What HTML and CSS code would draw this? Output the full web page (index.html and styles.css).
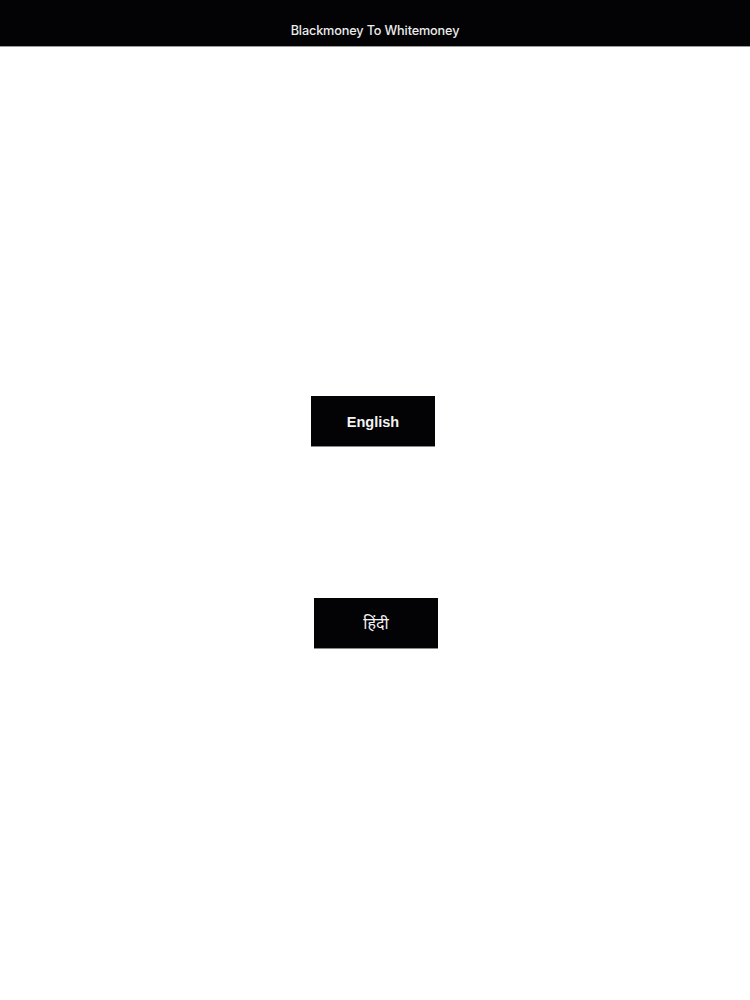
FILE: index.html
```html
<!DOCTYPE html>
<html lang="en">
<head>
<meta charset="utf-8">
<title>Blackmoney To Whitemoney</title>
<link rel="stylesheet" href="styles.css">
</head>
<body>
<header class="topbar">
  <h1 class="title">Blackmoney To Whitemoney</h1>
</header>
<main class="content">
  <button class="lang-btn lang-en">English</button>
  <button class="lang-btn lang-hi" lang="hi">हिंदी</button>
</main>
</body>
</html>
```
FILE: styles.css
```css
html, body {
  margin: 0;
  padding: 0;
  background: #ffffff;
  font-family: "Liberation Sans", Arial, sans-serif;
}
.topbar {
  height: 46px;
  background: #030205;
  border-bottom: 1px solid #9a9a9a;
  display: flex;
  align-items: flex-end;
  justify-content: center;
}
.title {
  margin: 0 0 7px 0;
  font-size: 12.7px;
  font-weight: 500;
  color: #ececec;
  font-family: "Inter", "Liberation Sans", sans-serif;
  letter-spacing: -0.15px;
  line-height: 16px;
}
.content {
  display: flex;
  flex-direction: column;
  align-items: center;
  padding-top: 349px;
  gap: 151px;
}
.lang-btn {
  width: 124px;
  height: 51px;
  background: #030205;
  color: #f4f4f4;
  border: 1px solid #8a8a8a;
  border-width: 0 0 1px 0;
  font-size: 15px;
  padding: 0;
  display: flex;
  align-items: center;
  justify-content: center;
}
.lang-en {
  font-weight: bold;
  font-size: 14.5px;
  margin-right: 4px;
  padding-top: 1px;
  font-family: "Liberation Sans", Arial, sans-serif;
}
.lang-hi {
  margin-left: 2px;
  font-family: "Noto Sans", "Noto Sans Devanagari", "Lohit Devanagari", sans-serif;
  font-size: 16px;
}
```
